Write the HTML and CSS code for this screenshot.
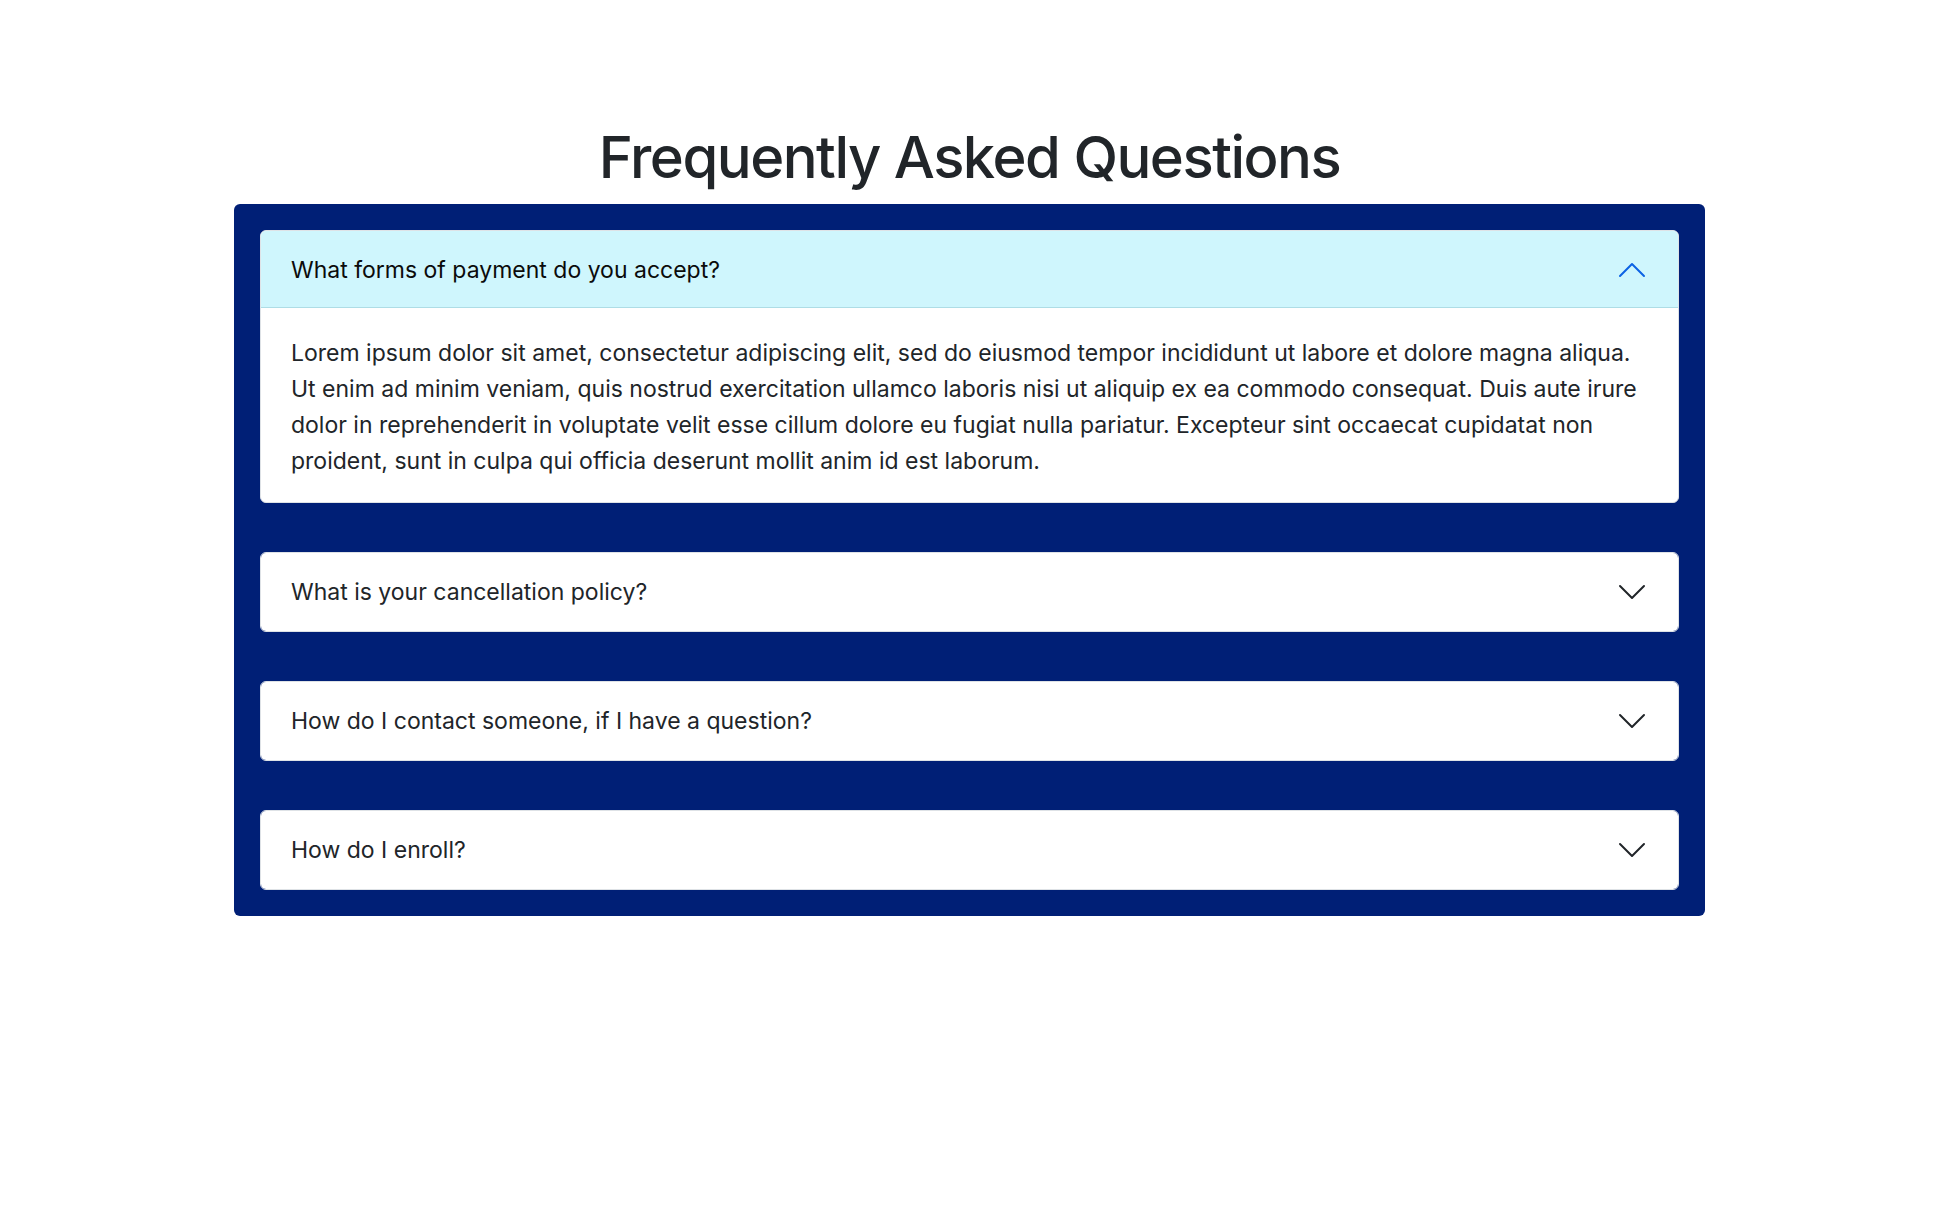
FILE: index.html
```html
<!DOCTYPE html>
<html lang="en">
<head>
<meta charset="utf-8">
<title>FAQ</title>
<link rel="stylesheet" href="styles.css">
</head>
<body>
<main class="page">
  <h1 class="title">Frequently Asked Questions</h1>
  <section class="faq">
    <div class="item open">
      <button class="q">
        <span>What forms of payment do you accept?</span>
        <svg class="chev up" viewBox="0 0 16 16"><path d="M2 5L8 11L14 5"/></svg>
      </button>
      <div class="a">Lorem ipsum dolor sit amet, consectetur adipiscing elit, sed do eiusmod tempor incididunt ut labore et dolore magna aliqua. Ut enim ad minim veniam, quis nostrud exercitation ullamco laboris nisi ut aliquip ex ea commodo consequat. Duis aute irure dolor in reprehenderit in voluptate velit esse cillum dolore eu fugiat nulla pariatur. Excepteur sint occaecat cupidatat non proident, sunt in culpa qui officia deserunt mollit anim id est laborum.</div>
    </div>
    <div class="item">
      <button class="q">
        <span>What is your cancellation policy?</span>
        <svg class="chev" viewBox="0 0 16 16"><path d="M2 5L8 11L14 5"/></svg>
      </button>
    </div>
    <div class="item">
      <button class="q">
        <span>How do I contact someone, if I have a question?</span>
        <svg class="chev" viewBox="0 0 16 16"><path d="M2 5L8 11L14 5"/></svg>
      </button>
    </div>
    <div class="item">
      <button class="q">
        <span>How do I enroll?</span>
        <svg class="chev" viewBox="0 0 16 16"><path d="M2 5L8 11L14 5"/></svg>
      </button>
    </div>
  </section>
</main>
</body>
</html>
```

FILE: styles.css
```css
* { box-sizing: border-box; }
html, body { margin: 0; padding: 0; background: #fff; }
body {
  font-family: Inter, "Noto Sans", "Liberation Sans", sans-serif;
  color: #212529;
}
.page {
  display: flex;
  flex-direction: column;
  align-items: center;
  padding-top: 122px;
}
.title {
  margin: 0 0 12px;
  font-size: 58px;
  line-height: 70px;
  font-weight: 500;
  color: #212529;
  letter-spacing: -1.5px;
}
.faq {
  width: 1471px;
  background: #001f76;
  border-radius: 6px;
  padding: 26px;
  display: flex;
  flex-direction: column;
  gap: 49px;
}
.item {
  background: #fff;
  border: 1px solid #dee2e6;
  border-radius: 6px;
  overflow: hidden;
}
.q {
  display: flex;
  align-items: center;
  justify-content: space-between;
  width: 100%;
  height: 78px;
  padding: 0 30px;
  border: 0;
  background: #fff;
  font-family: inherit;
  font-size: 23px;
  line-height: 30px;
  color: #212529;
  text-align: left;
}
.open .q {
  height: 77px;
  background: #cff6fd;
  color: #0b0b0b;
  box-shadow: inset 0 -1px 0 #aedde6;
}
.chev {
  width: 32px;
  height: 32px;
  margin: -1px 0;
  flex: none;
}
.chev path {
  fill: none;
  stroke: #212529;
  stroke-width: 1;
  stroke-linecap: round;
  stroke-linejoin: round;
}
.chev.up { transform: rotate(180deg); }
.chev.up path { stroke: #0c63e4; }
.a {
  padding: 27px 30px 23px;
  font-size: 23px;
  line-height: 36px;
  color: #212529;
}
```
